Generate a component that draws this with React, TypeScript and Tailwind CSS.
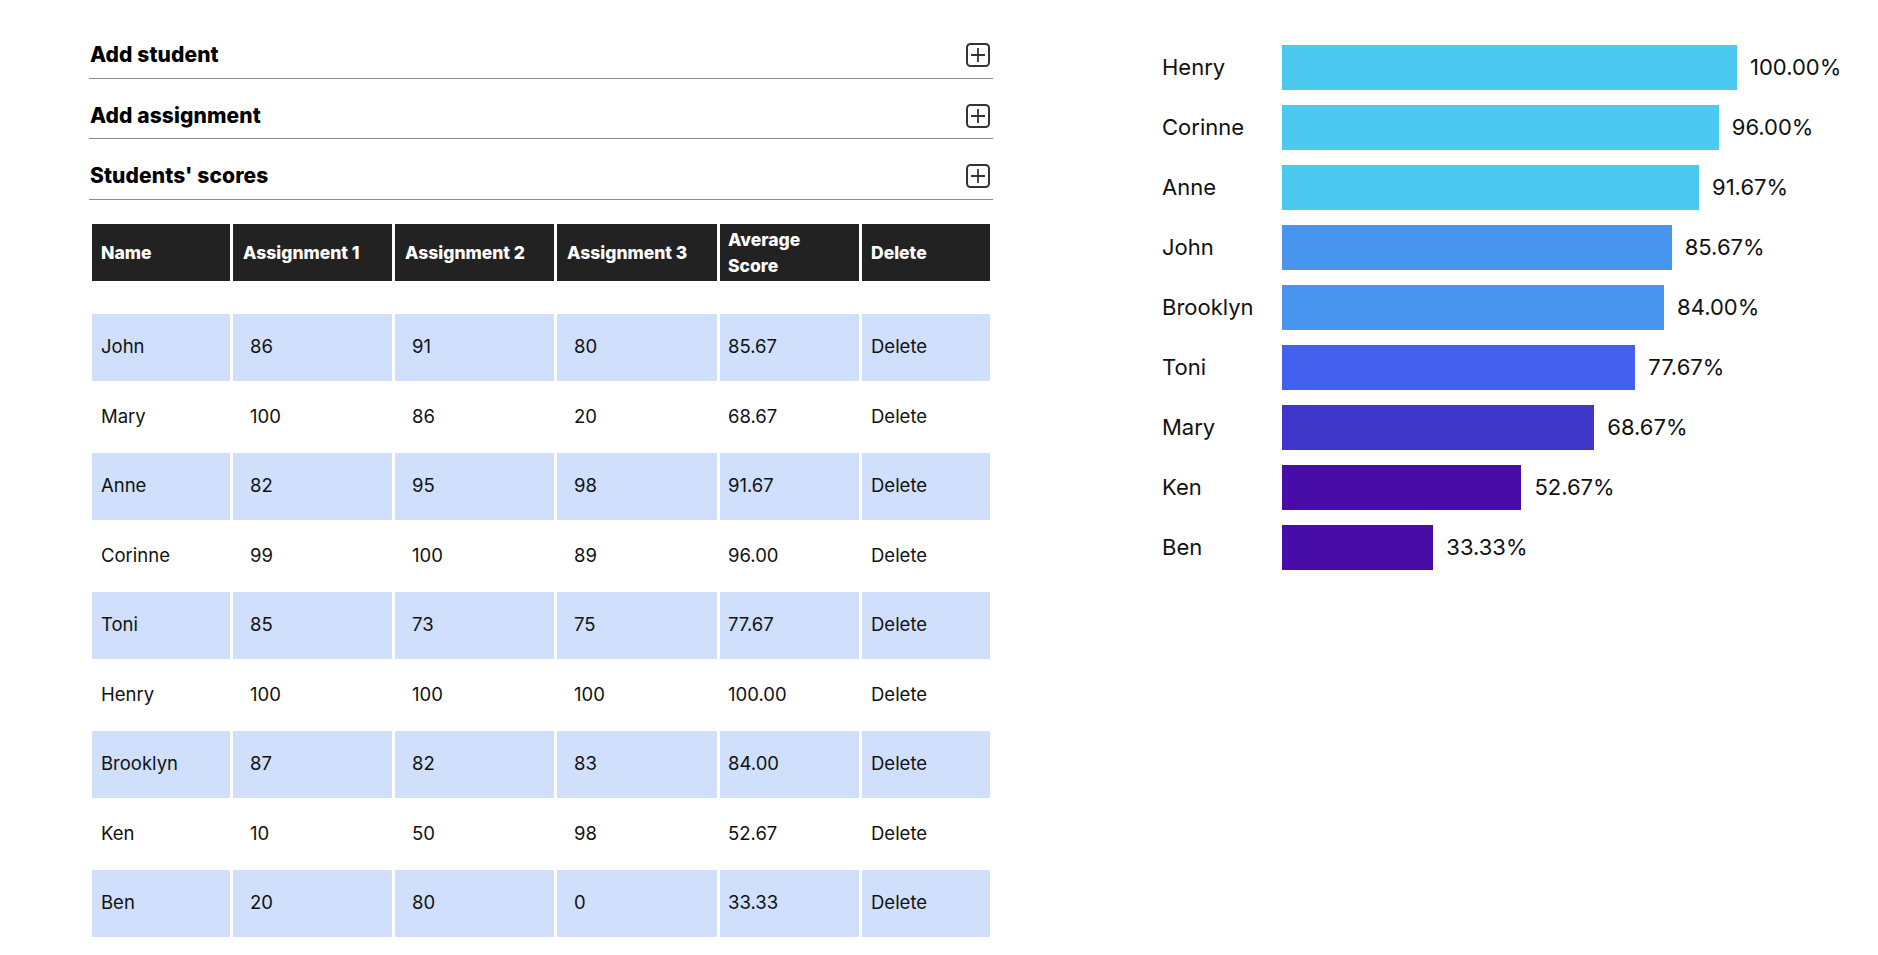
import React from "react";

interface Student {
  name: string;
  scores: number[];
}

const students: Student[] = [
  { name: "John", scores: [86, 91, 80] },
  { name: "Mary", scores: [100, 86, 20] },
  { name: "Anne", scores: [82, 95, 98] },
  { name: "Corinne", scores: [99, 100, 89] },
  { name: "Toni", scores: [85, 73, 75] },
  { name: "Henry", scores: [100, 100, 100] },
  { name: "Brooklyn", scores: [87, 82, 83] },
  { name: "Ken", scores: [10, 50, 98] },
  { name: "Ben", scores: [20, 80, 0] },
];

const average = (s: number[]) => s.reduce((a, b) => a + b, 0) / s.length;

// cor da barra conforme a média
const barColor = (avg: number) => {
  if (avg >= 90) return "bg-[#4cc9f0]";
  if (avg >= 80) return "bg-[#4895ef]";
  if (avg >= 70) return "bg-[#4361ee]";
  if (avg >= 60) return "bg-[#3f37c9]";
  return "bg-[#480ca8]";
};

const PlusBox = () => (
  <svg width="24" height="24" viewBox="0 0 24 24" fill="none" className="mr-[3px]">
    <rect x="1" y="1" width="22" height="22" rx="3.5" stroke="#333" strokeWidth="2" />
    <path d="M12 5v14M5 12h14" stroke="#333" strokeWidth="1.8" />
  </svg>
);

const AccordionItem = ({ title }: { title: string }) => (
  <div className="flex h-[60.5px] items-center justify-between border-b border-[#8a8a8a] pt-[14.5px]">
    <span className="pl-px text-[21px] font-extrabold tracking-[0.1px] text-black">{title}</span>
    <PlusBox />
  </div>
);

export default function App() {
  const ranked = [...students]
    .map((s) => ({ name: s.name, avg: average(s.scores) }))
    .sort((a, b) => b.avg - a.avg);

  return (
    <div
      className="flex min-h-screen bg-white pt-[18px] text-[#111]"
      style={{ fontFamily: "Inter, 'Open Sans', sans-serif" }}
    >
      {/* Painel esquerdo: acordeões + tabela */}
      <div className="ml-[89px] w-[904px] shrink-0">
        <AccordionItem title="Add student" />
        <AccordionItem title="Add assignment" />
        <AccordionItem title="Students' scores" />

        <table className="mt-[21.5px] w-full table-fixed border-separate border-spacing-[3px] text-left text-[18.5px]">
          <colgroup>
            <col className="w-[138px]" />
            <col className="w-[159px]" />
            <col className="w-[159px]" />
            <col className="w-[160px]" />
            <col className="w-[139px]" />
            <col className="w-[128px]" />
          </colgroup>
          <thead>
            <tr className="h-[57px] bg-[#222] text-white">
              <th className="px-[9px] text-[17.5px] font-extrabold leading-[26px]">Name</th>
              <th className="px-[10px] text-[17.5px] font-extrabold leading-[26px]">Assignment 1</th>
              <th className="px-[10px] text-[17.5px] font-extrabold leading-[26px]">Assignment 2</th>
              <th className="px-[10px] text-[17.5px] font-extrabold leading-[26px]">Assignment 3</th>
              <th className="px-[8px] text-[17.5px] font-extrabold leading-[26px]">Average Score</th>
              <th className="px-[9px] text-[17.5px] font-extrabold leading-[26px]">Delete</th>
            </tr>
          </thead>
          <tbody>
            <tr>
              <td colSpan={6} className="h-[27px] p-0" />
            </tr>
            {students.map((s, i) => (
              <tr key={s.name} className={i % 2 === 0 ? "h-[66.5px] bg-[#cfdffc]" : "h-[66.5px]"}>
                <td className="px-[9px]">{s.name}</td>
                {s.scores.map((v, j) => (
                  <td key={j} className="pl-[17px] pr-[9px]">
                    {v}
                  </td>
                ))}
                <td className="px-[8px]">{average(s.scores).toFixed(2)}</td>
                <td className="px-[9px]">Delete</td>
              </tr>
            ))}
          </tbody>
        </table>
      </div>

      {/* Painel direito: gráfico de barras */}
      <div className="ml-[169px] flex flex-col gap-[15px] pt-[27px]">
        {ranked.map((r) => (
          <div key={r.name} className="flex h-[45px] items-center text-[22px]">
            <span className="w-[119.5px] shrink-0">{r.name}</span>
            <div className={`h-[45px] ${barColor(r.avg)}`} style={{ width: (r.avg / 100) * 455.5 }} />
            <span className="ml-[13px]">{r.avg.toFixed(2)}%</span>
          </div>
        ))}
      </div>
    </div>
  );
}
